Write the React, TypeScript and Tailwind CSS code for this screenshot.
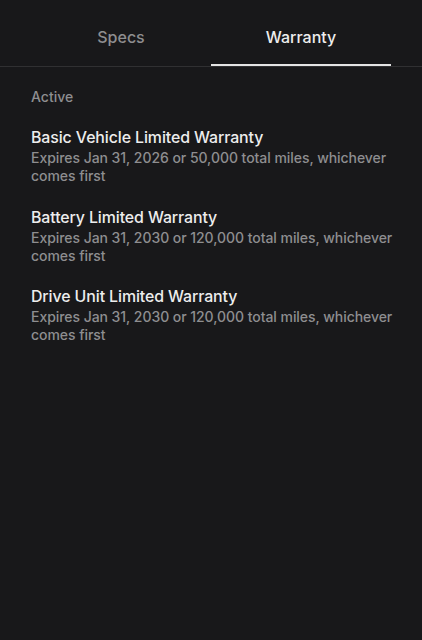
import React, { useState } from 'react';

const WARRANTIES = [
  { title: 'Basic Vehicle Limited Warranty', detail: 'Expires Jan 31, 2026 or 50,000 total miles, whichever comes first' },
  { title: 'Battery Limited Warranty', detail: 'Expires Jan 31, 2030 or 120,000 total miles, whichever comes first' },
  { title: 'Drive Unit Limited Warranty', detail: 'Expires Jan 31, 2030 or 120,000 total miles, whichever comes first' },
];

export default function App() {
  const [tab, setTab] = useState<'specs' | 'warranty'>('warranty');

  return (
    <div className="min-h-[640px] w-full bg-[#18181a] font-['Inter',sans-serif] antialiased">
      {/* Tabs */}
      <div className="border-b border-[#303032] px-[31px]">
        <div className="grid grid-cols-2">
          <button
            onClick={() => setTab('specs')}
            className={`h-[66px] pt-[10px] text-[16px] font-medium border-b-2 ${tab === 'specs' ? 'text-[#ededed] border-[#e4e4e4]' : 'text-[#8e8e90] border-transparent'}`}
          >
            Specs
          </button>
          <button
            onClick={() => setTab('warranty')}
            className={`h-[66px] pt-[10px] text-[16px] font-medium border-b-2 ${tab === 'warranty' ? 'text-[#ededed] border-[#e4e4e4]' : 'text-[#8e8e90] border-transparent'}`}
          >
            Warranty
          </button>
        </div>
      </div>

      {/* Content */}
      <div className="pl-[31px] pr-[20px] pt-[21px]">
        <p className="text-[14px] font-medium text-[#8e8e90] leading-[18px]">Active</p>
        <div className="mt-[22px] flex flex-col gap-[22.5px]">
          {WARRANTIES.map(w => (
            <div key={w.title}>
              <h3 className="text-[15.9px] font-medium text-[#ededed] leading-[20px] tracking-[-0.1px]">{w.title}</h3>
              <p className="mt-[1px] text-[14px] font-medium text-[#8e8e90] leading-[18px] tracking-[-0.05px]">{w.detail}</p>
            </div>
          ))}
        </div>
      </div>
    </div>
  );
}
